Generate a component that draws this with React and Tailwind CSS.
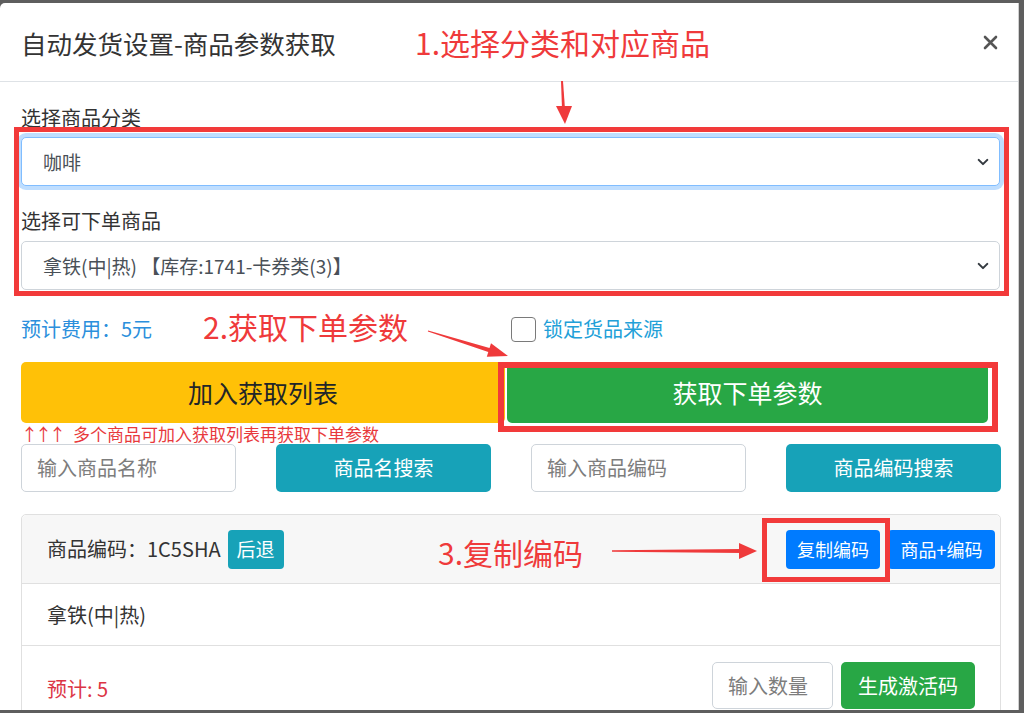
import React from "react";

const font = { fontFamily: "'Noto Sans CJK SC', 'Noto Sans', sans-serif" };

const Chevron = () => (
  <svg className="w-[14px] h-[10px]" viewBox="0 0 14 10" fill="none" stroke="#343a40" strokeWidth="2.4" strokeLinecap="round" strokeLinejoin="round">
    <path d="M2 2.5l5 5 5-5" />
  </svg>
);

const FakeSelect = ({ children, focused }) => (
  <div
    className={
      "w-[979px] h-[49px] flex items-center justify-between pl-[21px] pr-[4px] bg-white rounded-[5px] border text-[19px] text-[#495057] leading-[30px] " +
      (focused ? "border-[#80bdff] shadow-[0_0_0_4px_rgba(0,123,255,0.25)]" : "border-[#ced4da]")
    }
  >
    <span>{children}</span>
    <span className="w-[12px] flex justify-center mr-[6px]">
      <Chevron />
    </span>
  </div>
);

const App = () => {
  return (
    <div style={font} className="relative w-[1024px] h-[713px] overflow-hidden bg-[#5e5e5e]">
      <div className="mt-[3px] w-[1019px] h-[707px] bg-white rounded-tl-[5px] border-r border-[#d0d0d0] overflow-hidden">
        {/* header */}
        <div className="h-[79px] flex items-center justify-between pl-[21px] pr-[19px] border-b border-[#dee2e6]">
          <h5 className="text-[25.5px] leading-[37px] text-[#333]">自动发货设置-商品参数获取</h5>
          <svg className="w-[15px] h-[15px] mr-[1px]" viewBox="0 0 15 15" stroke="#555" strokeWidth="2.6" strokeLinecap="round">
            <path d="M2 2l11 11M13 2L2 13" />
          </svg>
        </div>

        {/* body */}
        <div className="pl-[21px] pt-[21px]">
          <div className="text-[20px] leading-[30px] text-[#333]">选择商品分类</div>
          <div className="mt-[4px]">
            <FakeSelect focused>咖啡</FakeSelect>
          </div>
          <div className="mt-[20px] text-[20px] leading-[30px] text-[#333]">选择可下单商品</div>
          <div className="mt-[5px]">
            <FakeSelect>拿铁(中|热) 【库存:1741-卡券类(3)】</FakeSelect>
          </div>

          <div className="mt-[24px] h-[30px] flex items-center">
            <div className="w-[490px] text-[20px] leading-[30px] text-[#2b8fdc]">预计费用：5元</div>
            <div className="w-[25px] h-[25px] rounded-[4px] border-[1.5px] border-[#7a7a7a] bg-white" />
            <span className="ml-[7px] text-[20px] leading-[30px] text-[#22a0d8]">锁定货品来源</span>
          </div>

          <div className="mt-[18px] flex">
            <button className="w-[484px] h-[61px] rounded-[5px] bg-[#ffc107] text-[25px] text-[#212529]">加入获取列表</button>
            <button className="ml-[2px] w-[481px] h-[61px] rounded-[5px] bg-[#28a745] text-[25px] text-white">获取下单参数</button>
          </div>

          <div className="mt-[1px] h-[20px] text-[17px] leading-[20px] text-[#e8393c]">
            <span className="tracking-[-3px]">↑↑↑</span>
            <span className="ml-[10px]">多个商品可加入获取列表再获取下单参数</span>
          </div>

          <div className="w-[980px] grid grid-cols-4 gap-[40px]">
            <div className="h-[48px] flex items-center px-[15px] rounded-[5px] border border-[#ced4da] text-[20px] text-[#7d7d7d]">输入商品名称</div>
            <button className="h-[48px] rounded-[5px] bg-[#17a2b8] text-[20px] text-white">商品名搜索</button>
            <div className="h-[48px] flex items-center px-[15px] rounded-[5px] border border-[#ced4da] text-[20px] text-[#7d7d7d]">输入商品编码</div>
            <button className="h-[48px] rounded-[5px] bg-[#17a2b8] text-[20px] text-white">商品编码搜索</button>
          </div>

          {/* card */}
          <div className="mt-[22px] w-[980px] h-[260px] rounded-[5px] border border-[#e0e0e0]">
            <div className="h-[69px] flex items-center justify-between pl-[25px] pr-[5px] bg-[#f7f7f7] border-b border-[#e0e0e0] rounded-t-[5px]">
              <div className="flex items-center">
                <span className="text-[20px] text-[#333]">商品编码：1C5SHA</span>
                <button className="ml-[7px] h-[39px] px-[9px] rounded-[4px] bg-[#17a2b8] text-[19px] text-white">后退</button>
              </div>
              <div className="flex items-center">
                <button className="h-[39px] w-[94px] rounded-[4px] bg-[#007bff] text-[18px] text-white">复制编码</button>
                <button className="ml-[8px] h-[39px] w-[107px] rounded-[4px] bg-[#007bff] text-[18px] text-white">商品+编码</button>
              </div>
            </div>
            <div className="h-[62px] flex items-center px-[25px] border-b border-[#e0e0e0] text-[20px] text-[#333]">拿铁(中|热)</div>
            <div className="pt-[16px] flex items-center pl-[25px] pr-[25px]">
              <span className="mt-[6px] text-[20px] text-[#dc3545]">预计: 5</span>
              <div className="ml-auto w-[121px] h-[47px] flex items-center px-[15px] rounded-[5px] border border-[#ced4da] text-[20px] text-[#7d7d7d]">输入数量</div>
              <button className="ml-[8px] w-[134px] h-[47px] rounded-[5px] bg-[#28a745] text-[20px] text-white">生成激活码</button>
            </div>
          </div>
        </div>
      </div>

      {/* annotations */}
      <div className="absolute left-[415px] top-[26px] text-[30px] leading-[32px] text-[#ef3a3b]">1.选择分类和对应商品</div>
      <svg className="absolute left-[553px] top-[81px] w-[22px] h-[46px]" viewBox="0 0 22 46">
        <polygon points="8,0 10,0 12,28 9,28" fill="#ef3a3b" />
        <polygon points="3,25 19,25 12,43" fill="#ef3a3b" />
      </svg>
      <div className="absolute left-[14px] top-[127px] w-[995px] h-[169px] border-[5px] border-[#f23a3a]" />

      <div className="absolute left-[203px] top-[310px] text-[30px] leading-[32px] text-[#ef3a3b]">2.获取下单参数</div>
      <svg className="absolute left-[425px] top-[325px] w-[90px] h-[36px]" viewBox="0 0 90 36">
        <polygon points="3.15,5.52 64.5,23.1 66,18.3 83,31 61.8,31.7 63.3,26.9 2.85,6.48" fill="#ef3a3b" />
      </svg>
      <div className="absolute left-[498px] top-[362px] w-[500px] h-[70px] border-[6px] border-[#f23a3a]" />

      <div className="absolute left-[438px] top-[536px] text-[30px] leading-[32px] text-[#ef3a3b]">3.复制编码</div>
      <svg className="absolute left-[610px] top-[540px] w-[150px] h-[22px]" viewBox="0 0 150 22">
        <polygon points="2,10.3 132,9 132,13 2,11.7" fill="#ef3a3b" />
        <polygon points="129,3 147,11 129,19" fill="#ef3a3b" />
      </svg>
      <div className="absolute left-[762px] top-[518px] w-[128px] h-[64px] border-[5px] border-[#f23a3a]" />
    </div>
  );
};

export default App;
